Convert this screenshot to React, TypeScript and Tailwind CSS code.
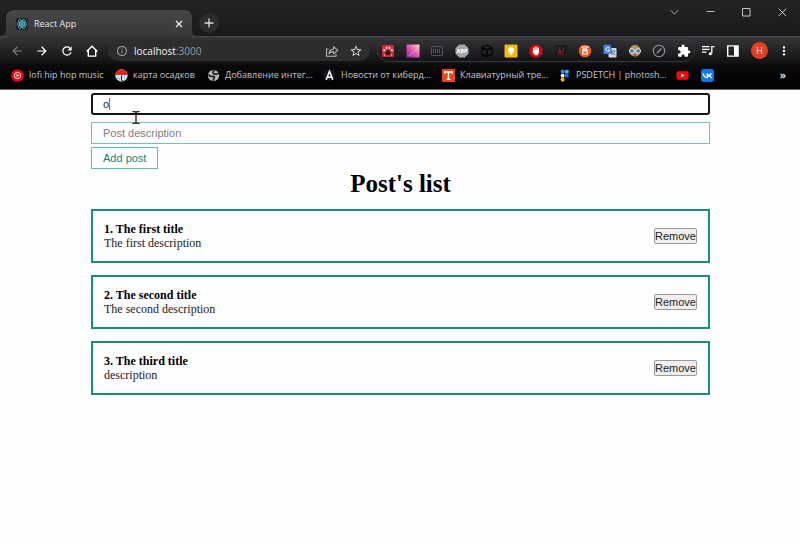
import React, { useState } from "react";
import {
  MdArrowBack,
  MdArrowForward,
  MdRefresh,
  MdInfoOutline,
  MdStarBorder,
  MdExtension,
  MdMoreVert,
} from "react-icons/md";

const UI_FONT = "font-['Open_Sans','Noto_Sans',sans-serif]";
const PAGE_FONT = "font-['Liberation_Serif','Times_New_Roman',serif]";
const FORM_FONT = "font-['Liberation_Sans',Arial,sans-serif]";

function ReactLogo() {
  return (
    <svg viewBox="0 0 24 24" className="size-3 shrink-0 rounded-xs bg-[#20232a]">
      <g fill="none" stroke="#5cc4dc" strokeWidth="1.6">
        <ellipse cx="12" cy="12" rx="10" ry="4" />
        <ellipse cx="12" cy="12" rx="10" ry="4" transform="rotate(60 12 12)" />
        <ellipse cx="12" cy="12" rx="10" ry="4" transform="rotate(120 12 12)" />
      </g>
      <circle cx="12" cy="12" r="2" fill="#5cc4dc" />
    </svg>
  );
}

function TabStrip() {
  return (
    <div className="flex h-9 items-end bg-linear-to-b from-[#242326] to-[#19181b] pl-1.5">
      <div className="relative -mb-px flex h-[27px] w-[186px] items-center rounded-t-lg bg-linear-to-b from-[#48474a] to-[#373639] pr-[7px] pl-2.5">
        <svg viewBox="0 0 6 6" className="absolute right-full bottom-px size-1.5" fill="#39383b">
          <path d="M6 0v6H0Q6 6 6 0z" />
        </svg>
        <svg viewBox="0 0 6 6" className="absolute bottom-px left-full size-1.5" fill="#39383b">
          <path d="M0 0v6h6Q0 6 0 0z" />
        </svg>
        <ReactLogo />
        <span className="ml-1.5 flex-1 text-[9px] text-[#e6e6e6]">React App</span>
        <button aria-label="Close tab" className="flex size-3 items-center justify-center">
          <svg viewBox="0 0 8 8" className="size-2" stroke="#f0f0f0" strokeWidth="1.3">
            <path d="M1 1l6 6M7 1l-6 6" />
          </svg>
        </button>
      </div>
      <button
        aria-label="New tab"
        className="mb-[3px] ml-[7px] flex size-5 items-center justify-center rounded-full bg-[#2c2b2e]"
      >
        <svg viewBox="0 0 10 10" className="size-2.5" stroke="#dcdcdc" strokeWidth="1.3">
          <path d="M5 0.5v9M0.5 5h9" />
        </svg>
      </button>
      <div className="mr-[13px] ml-auto flex h-full items-start gap-[27px] pt-2">
        <button aria-label="Search tabs">
          <svg viewBox="0 0 9 9" className="block size-[9px]" fill="none" stroke="#a8a8a8">
            <path d="M0.8 2.2l3.7 4L8.2 2.2" />
          </svg>
        </button>
        <button aria-label="Minimize">
          <svg viewBox="0 0 9 9" className="block size-[9px]" stroke="#b8b8b8">
            <path d="M0.5 3.5h8" />
          </svg>
        </button>
        <button aria-label="Maximize">
          <svg viewBox="0 0 9 9" className="block size-[9px]" fill="none" stroke="#c8c8c8">
            <path d="M0.5 0.5h7.5v7.5h-7.5z" />
          </svg>
        </button>
        <button aria-label="Close">
          <svg viewBox="0 0 9 9" className="block size-[9px]" stroke="#d0d0d0">
            <path d="M0.7 0.7l7.4 7.4M8.1 0.7l-7.4 7.4" />
          </svg>
        </button>
      </div>
    </div>
  );
}

const extensions: { name: string; art: React.ReactNode }[] = [
  {
    name: "Paw",
    art: (
      <>
        <rect x="1" y="1" width="12" height="12" rx="1" fill="#d02a33" />
        <path d="M7 6.2q-1.600 0-2.600 2.300t1 2.500q1.600-0.600 3.200 0 2-0.300 1-2.500T7 6.200z" fill="#3a1216" />
        <ellipse cx="3.300" cy="6.200" rx="1" ry="1.300" fill="#f4dada" />
        <ellipse cx="5.600" cy="4" rx="1" ry="1.400" fill="#f4dada" />
        <ellipse cx="8.600" cy="4" rx="1" ry="1.400" fill="#f4dada" />
        <ellipse cx="10.800" cy="6.200" rx="1" ry="1.300" fill="#f4dada" />
        <path d="M3 11.500l1.500-1.200M11 11.500l-1.500-1.200" stroke="#f4dada" />
      </>
    ),
  },
  {
    name: "Gradient",
    art: (
      <>
        <defs>
          <linearGradient id="pinkFade" x1="0" y1="1" x2="1" y2="0">
            <stop offset="0" stopColor="#7d2fa0" />
            <stop offset="0.5" stopColor="#e258b4" />
            <stop offset="1" stopColor="#ffd9c8" />
          </linearGradient>
        </defs>
        <rect x="0.5" y="0.5" width="13" height="13" fill="url(#pinkFade)" />
        <path d="M3 12L12 4" stroke="#f7a8d0" strokeWidth="0.8" />
      </>
    ),
  },
  {
    name: "Barcode",
    art: (
      <g fill="none" stroke="#565559">
        <rect x="1.5" y="2.5" width="11" height="9" rx="1" />
        <path d="M3.500 5v4M5.500 5v4M7.500 5v4M9.500 5v4" />
      </g>
    ),
  },
  {
    name: "AdBlock Plus",
    art: (
      <>
        <path d="M4.3 0.5h5.4l3.8 3.8v5.4l-3.8 3.8H4.3L0.5 9.7V4.3z" fill="#a6a6a8" />
        <text x="7" y="9.200" textAnchor="middle" fontSize="5.600" fontWeight="700" fill="#fff">
          ABP
        </text>
      </>
    ),
  },
  {
    name: "Cube",
    art: (
      <path
        d="M7 1.2l5.2 2.4v6.6L7 12.8l-5.2-2.6V3.6zM1.8 3.6L7 6.2l5.2-2.6M7 6.2v6.6"
        fill="none"
        stroke="#030303"
        strokeWidth="1.3"
      />
    ),
  },
  {
    name: "Keep",
    art: (
      <>
        <rect x="0.5" y="0.5" width="13" height="13" rx="1" fill="#f6b90d" />
        <circle cx="7" cy="6" r="2.900" fill="#fff" />
        <rect x="5.700" y="8" width="2.600" height="2.600" fill="#fff" />
      </>
    ),
  },
  {
    name: "AdBlock",
    art: (
      <>
        <path d="M4.3 0.5h5.4l3.8 3.8v5.4l-3.8 3.8H4.3L0.5 9.7V4.3z" fill="#d60a12" />
        <path
          d="M4.6 7V4.4M6.2 6.5V3.2M7.8 6.5V3.2M9.3 7V4.2"
          stroke="#fff"
          strokeWidth="1.2"
          strokeLinecap="round"
        />
        <path d="M4 6.3h5.9v2.4L8.4 11.3H6L3.6 8z" fill="#fff" />
      </>
    ),
  },
  {
    name: "Habr",
    art: (
      <>
        <rect x="1" y="1" width="12" height="12" rx="1" fill="#1b1a1d" />
        <path
          d="M6 3L4.500 10.500M5 7.600q2-2 2 0l-0.500 3M9.500 3.500L8.800 8.500M8.500 9.600v1.200"
          fill="none"
          stroke="#9a1a1c"
          strokeWidth="1.1"
        />
      </>
    ),
  },
  {
    name: "Bitcoin",
    art: (
      <>
        <circle cx="7" cy="7" r="6.3" fill="#ef5a1c" />
        <path
          d="M3 3h8M4.800 4.800h2.800q1.600 0.200 1.200 2h-4M8.800 6.800q1.800 3.200-1 3.200h-3V4.800"
          fill="none"
          stroke="#fff"
          strokeWidth="1.2"
        />
      </>
    ),
  },
  {
    name: "Translate",
    art: (
      <>
        <rect x="5.5" y="4" width="8" height="9.5" rx="1" fill="#d5d8dd" />
        <path
          d="M8.500 7h4M10.500 6v1M12 7q-1 3-3 4M9.500 8.500q1 2 3 2.500"
          fill="none"
          stroke="#6a7889"
          strokeWidth="0.8"
        />
        <path d="M1.300 0.800h6.200l2.400 9.200H1.300q-0.800 0-0.800-0.800V1.600q0-0.800 0.800-0.800z" fill="#4583ea" />
        <path d="M6.500 4.200A2 2 0 1 0 6.800 6H5" fill="none" stroke="#fff" />
      </>
    ),
  },
  {
    name: "Face",
    art: (
      <>
        <circle cx="7" cy="7" r="5.6" fill="#c98e63" />
        <path d="M1.800 5.500Q3 1 7 1t5.200 4.500z" fill="#b9906c" />
        <circle cx="3.900" cy="7" r="2.400" fill="#4c8191" stroke="#e7edf0" />
        <circle cx="10.100" cy="7" r="2.400" fill="#4c8191" stroke="#e7edf0" />
        <path d="M5.500 11h3" stroke="#6b3d2a" />
      </>
    ),
  },
  {
    name: "Disabled",
    art: (
      <>
        <circle cx="7" cy="7" r="5.700" fill="none" stroke="#96969a" strokeWidth="1.1" />
        <path d="M4.800 9.200L9.400 4.600" stroke="#96969a" strokeWidth="1.4" />
      </>
    ),
  },
];

function Toolbar() {
  return (
    <div className="flex h-7 items-center border-t border-[#47464a] bg-linear-to-b from-[#363538] to-[#111013] pr-[9px] pl-2.5 text-white">
      <div className="flex gap-[11px]">
        <button aria-label="Back">
          <MdArrowBack className="size-3.5 text-[#7d7c80]" />
        </button>
        <button aria-label="Forward">
          <MdArrowForward className="size-3.5" />
        </button>
        <button aria-label="Reload">
          <MdRefresh className="size-3.5" />
        </button>
        <button aria-label="Home">
          <svg viewBox="0 0 14 14" className="size-3.5" fill="none" stroke="#fff" strokeWidth="1.4">
            <path d="M1.6 7.4L7 2.2l5.4 5.2M3.3 6.2v5.9h7.4V6.2" />
          </svg>
        </button>
      </div>
      <div className="ml-[9px] flex h-[21px] w-[262px] items-center rounded-full bg-[#2d2c2f] pr-[7px] pl-2">
        <MdInfoOutline className="size-3 text-[#a0a0a3]" />
        <span className="ml-1.5 flex-1 text-[10px] leading-4 text-[#9b9b9e]">
          <span className="text-[#f3f3f3]">localhost</span>:3000
        </span>
        <button aria-label="Share">
          <svg viewBox="0 0 14 14" className="size-3.5" fill="none" stroke="#b2b2b5" strokeWidth="1.1">
            <path d="M3.5 5H1.5v7.3h9.5V9.8" />
            <path d="M4 9.6Q4.4 5.4 8.6 5.1V2.6l4.2 3.7-4.2 3.6V7.6Q5.6 7.5 4 9.6z" strokeLinejoin="round" />
          </svg>
        </button>
        <button aria-label="Bookmark this page" className="ml-2.5">
          <MdStarBorder className="size-3.5 text-[#d4d4d6]" />
        </button>
      </div>
      <div className="ml-[7px] flex h-[23px] flex-1 items-center justify-between rounded-full border border-[#39383c] px-[3px]">
        {extensions.map((ext) => (
          <button key={ext.name} aria-label={ext.name}>
            <svg viewBox="0 0 14 14" className="block size-3.5">
              {ext.art}
            </svg>
          </button>
        ))}
        <button aria-label="Extensions">
          <MdExtension className="block size-3.5" />
        </button>
      </div>
      <div className="ml-1.5 flex items-center gap-[9px]">
        <button aria-label="Media">
          <svg viewBox="0 0 14 14" className="block size-3.5" stroke="#fff" strokeWidth="1.3" fill="none">
            <path d="M1 2.6h7.5M1 5.4h7.5M1 8.2h4.5M10.8 9.5V2.6h2.7" />
            <circle cx="9.3" cy="9.8" r="1.5" fill="#fff" stroke="none" />
          </svg>
        </button>
        <button aria-label="Side panel" className="flex w-[18px] justify-center">
          <svg viewBox="0 0 14 14" className="block size-3.5" fill="none" stroke="#fff" strokeWidth="1.4">
            <path d="M1.7 1.9h10.4v10.2H1.7z" />
            <path d="M8 2h4v10H8z" fill="#fff" stroke="none" />
          </svg>
        </button>
        <button
          aria-label="Profile"
          className="flex size-[17px] items-center justify-center rounded-full bg-[#e3401f] text-[9px] text-white"
        >
          Н
        </button>
        <button aria-label="Menu">
          <MdMoreVert className="block size-3.5" />
        </button>
      </div>
    </div>
  );
}

const bookmarks: { name: string; title?: string; width: string; art: React.ReactNode }[] = [
  {
    name: "YouTube Music",
    title: "lofi hip hop music",
    width: "w-[92px]",
    art: (
      <>
        <circle cx="7" cy="7" r="6.8" fill="#e5090e" />
        <circle cx="7" cy="7" r="3.4" fill="none" stroke="#fff" />
        <path d="M6 5.2v3.6L8.9 7z" fill="#fff" />
      </>
    ),
  },
  {
    name: "Weather map",
    title: "карта осадков",
    width: "w-20",
    art: (
      <>
        <circle cx="7" cy="7" r="6.6" fill="#d3eef5" />
        <path
          d="M0.4 7a6.6 6.6 0 0 1 13.2 0q-1.6-1.4-3.3 0Q8.6 5.6 7 7 5.4 5.6 3.7 7 2 5.6 0.4 7z"
          fill="#e2231a"
        />
        <path d="M7 7v4.5q0 1.5 1.8 1" fill="none" stroke="#1c3440" strokeWidth="1.2" />
        <path d="M3 9v1.5M5 10v1.5M10.5 9v1.5" stroke="#3aa0c0" />
      </>
    ),
  },
  {
    name: "Integration",
    title: "Добавление интег...",
    width: "w-[104px]",
    art: (
      <>
        <circle cx="7" cy="7" r="6" fill="#b5b5b8" />
        <path
          d="M1.500 6Q4 9 6.500 7.800q2.500 0.200 1 2.200L6.500 12.500M8 1.500Q5 4 7.500 5.200t5-0.700"
          fill="none"
          stroke="#18181a"
          strokeWidth="1.7"
        />
      </>
    ),
  },
  {
    name: "News",
    title: "Новости от киберд...",
    width: "w-[107px]",
    art: (
      <>
        <path d="M1 2L7 0.5 13 2l-0.5 8L7 13.5 1.5 10z" fill="#15191e" />
        <path d="M3.4 11.5L7 2.5l3.6 9M4.8 8.8h4.4" fill="none" stroke="#fff" strokeWidth="1.7" />
      </>
    ),
  },
  {
    name: "Typing",
    title: "Клавиатурный тре...",
    width: "w-[104px]",
    art: (
      <>
        <rect x="0" y="0" width="14" height="14" fill="#e9481c" />
        <path d="M3 5V3.3h8V5M7 3.5v7.5M5 11h4" fill="none" stroke="#fff" strokeWidth="1.6" />
      </>
    ),
  },
  {
    name: "PSDETCH",
    title: "PSDETCH | photosh...",
    width: "w-[106px]",
    art: (
      <>
        <circle cx="5" cy="2.700" r="2.200" fill="#2b8cf0" />
        <circle cx="9.500" cy="2.900" r="2.200" fill="#3fb5ff" />
        <circle cx="5" cy="7.200" r="2" fill="#fff" />
        <circle cx="9.300" cy="7.200" r="2.200" fill="#1673e0" />
        <circle cx="5" cy="11.400" r="2.200" fill="#f5b51b" />
      </>
    ),
  },
  {
    name: "YouTube",
    width: "w-[13px]",
    art: (
      <>
        <rect x="0.5" y="2.5" width="13" height="9" rx="2" fill="#f20a0a" />
        <path d="M5.7 5v4L9.2 7z" fill="#fff" />
      </>
    ),
  },
  {
    name: "VK",
    width: "w-[13px]",
    art: (
      <>
        <rect x="0" y="0" width="14" height="14" rx="3.5" fill="#0a78f5" />
        <path
          d="M2.3 4.7Q3 9.2 6.8 9.3V4.7M11.3 4.7Q10 7 7 7q3 0 4.6 2.5"
          fill="none"
          stroke="#fff"
          strokeWidth="1.5"
        />
      </>
    ),
  },
];

function BookmarksBar() {
  return (
    <nav className="flex h-[26px] items-center gap-3 border-b border-[#66656a] bg-linear-to-b from-[#0c0b0e] to-[#020203] pr-3.5 pb-[3px] pl-[11px]">
      {bookmarks.map((b) => (
        <a key={b.name} href="#" aria-label={b.name} className={`flex shrink-0 items-center gap-[5px] ${b.width}`}>
          <svg viewBox="0 0 14 14" className="size-[13px] shrink-0">
            {b.art}
          </svg>
          {b.title && (
            <span className="text-[9px] leading-4 whitespace-nowrap text-[#c4c4c6]">{b.title}</span>
          )}
        </a>
      ))}
      <button aria-label="More bookmarks" className="ml-auto text-[10px] leading-4 font-bold text-[#dedede]">
        »
      </button>
    </nav>
  );
}

interface Post {
  id: number;
  title: string;
  description: string;
}

const initialPosts: Post[] = [
  { id: 1, title: "The first title", description: "The first description" },
  { id: 2, title: "The second title", description: "The second description" },
  { id: 3, title: "The third title", description: "description" },
];

function PointerBeam() {
  return (
    <svg
      viewBox="0 0 8 13"
      className="pointer-events-none absolute top-[18px] left-[41px] h-[13px] w-2"
      fill="none"
      stroke="#1c1c1c"
      strokeWidth="1.3"
    >
      <path d="M0.5 0.7h2.500l1 0.800 1-0.800h2.500M4 1.500v10M0.500 12.300h2.500l1-0.800 1 0.800h2.500" />
    </svg>
  );
}

export default function App() {
  const [posts, setPosts] = useState(initialPosts);
  const [title, setTitle] = useState("o");
  const [description, setDescription] = useState("");

  const addPost = (e: React.FormEvent) => {
    e.preventDefault();
    setPosts([...posts, { id: Date.now(), title, description }]);
    setTitle("");
    setDescription("");
  };

  return (
    <div className="min-h-screen bg-[#fefdff]">
      <header className={UI_FONT}>
        <TabStrip />
        <Toolbar />
        <BookmarksBar />
      </header>
      <main className={`pt-[3px] pr-[90px] pl-[91px] text-black ${PAGE_FONT}`}>
        <form onSubmit={addPost} className={`text-[11px] ${FORM_FONT}`}>
          <div className="relative">
            <input
              aria-label="Post title"
              value={title}
              onChange={(e) => setTitle(e.target.value)}
              className="block h-[22px] w-full rounded-[3px] border-2 border-[#151515] bg-white px-[10px] text-[#222]"
            />
            <span className="pointer-events-none absolute top-[5px] left-[18px] h-3 w-px bg-[#777]" />
            <PointerBeam />
          </div>
          <input
            aria-label="Post description"
            placeholder="Post description"
            value={description}
            onChange={(e) => setDescription(e.target.value)}
            className="mt-[7px] block h-[22px] w-full border border-[#6fc4b6] bg-white px-[11px] placeholder:text-[#7b7b7b]"
          />
          <button
            type="submit"
            className="mt-[3px] block h-[22px] border border-[#5dbfae] bg-white px-[11px] text-[#168472]"
          >
            Add post
          </button>
        </form>
        <h1 className="mt-px text-center text-[25px] leading-7 font-bold">Post's list</h1>
        <ul className="mt-[11px] flex flex-col gap-3">
          {posts.map((post, index) => (
            <li
              key={post.id}
              className="flex items-center justify-between border-2 border-[#16907c] p-[11px]"
            >
              <div className="text-[12px] leading-[14px]">
                <strong className="block">
                  {index + 1}. {post.title}
                </strong>
                <p className="text-[#222]">{post.description}</p>
              </div>
              <button
                onClick={() => setPosts(posts.filter((p) => p.id !== post.id))}
                className={`h-4 rounded-xs border border-[#9a9a9a] bg-[#efefef] text-[11px] leading-3 text-[#222] ${FORM_FONT}`}
              >
                Remove
              </button>
            </li>
          ))}
        </ul>
      </main>
    </div>
  );
}
